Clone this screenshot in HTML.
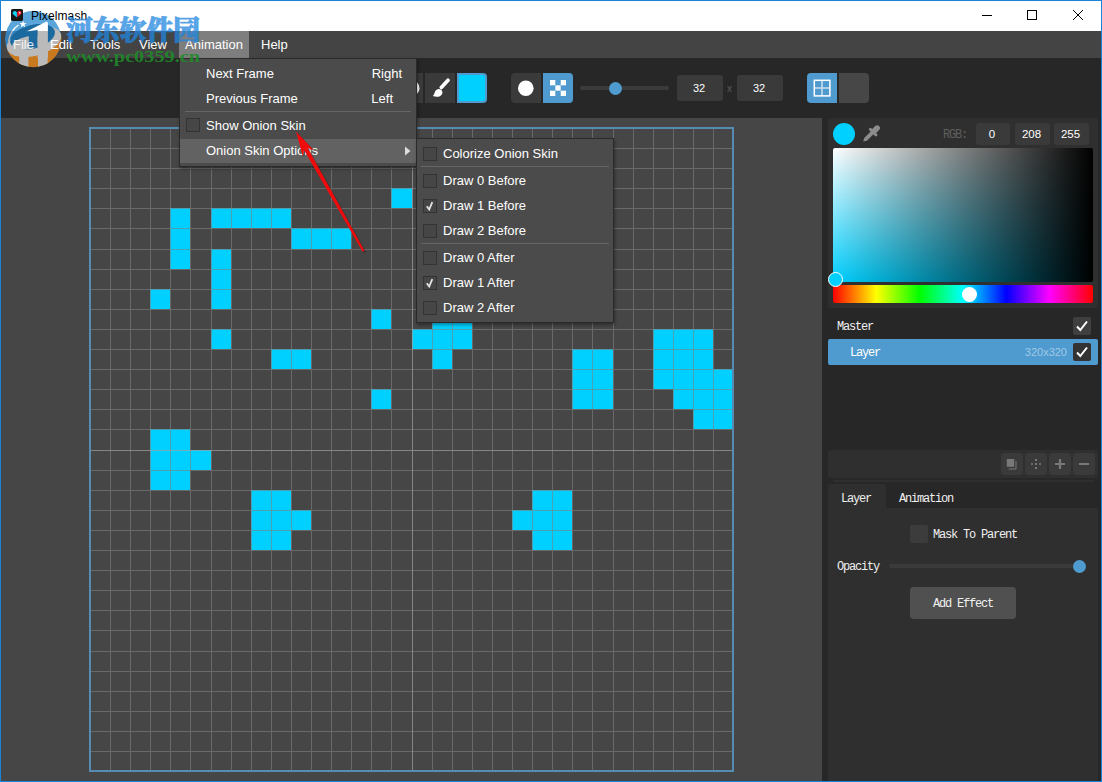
<!DOCTYPE html>
<html lang="en">
<head>
<meta charset="utf-8">
<title>Pixelmash</title>
<style>
*{box-sizing:border-box;margin:0;padding:0}
html,body{width:1102px;height:782px;overflow:hidden;background:#272727}
body{position:relative;font-family:"Liberation Sans",sans-serif;color:#eee}
.abs{position:absolute}
#win{position:absolute;left:0;top:0;width:1102px;height:782px;border:1px solid #1883d7;overflow:hidden;background:#272727}
#title{position:absolute;left:1px;top:1px;width:1100px;height:30px;background:#fff;color:#000;font-size:12px}
#title .name{position:absolute;left:30px;top:8px;line-height:14px;letter-spacing:.1px}
#menubar{position:absolute;left:1px;top:31px;width:1100px;height:27px;background:#444;font-size:13px;color:#fff}
#menubar span{position:absolute;top:0;height:27px;line-height:27px;}
#toolbar{position:absolute;left:1px;top:58px;width:1100px;height:60px;background:#272727}
#canvas{position:absolute;left:1px;top:118px;width:821px;height:663px;background:#464646}
.grid{position:absolute;left:0;top:118px}
.tb{position:absolute;top:73px;height:30px;background:#3a3a3a}
.inp{position:absolute;text-indent:-2px;background:#3a3a3a;border-radius:3px;color:#fff;font-size:11px;text-align:center}
.mono{font-family:"Liberation Mono","DejaVu Sans Mono",monospace;font-size:12px;letter-spacing:-1.2px;color:#f0f0f0;white-space:nowrap;margin-top:1px}
.menu{position:absolute;background:#4b4b4b;border:1px solid #2a2a2a;box-shadow:1px 2px 3px rgba(0,0,0,.35);font-size:13px;color:#fff}
.menu .it{position:absolute;left:0;right:0;height:25px;line-height:25px;white-space:nowrap}
.menu .sep{position:absolute;height:1px;background:#666}
.cb{position:absolute;width:14px;height:14px;border:1px solid #333;background:#464646}
.panel{position:absolute;background:#2f2f2f;border-radius:3px}
.chk{position:absolute;width:18px;height:18px;background:#3f3f3f;border-radius:2px}
.lbtn{position:absolute;top:453px;width:22px;height:22px;background:#3a3a3a;border-radius:3px}
</style>
</head>
<body>
<div id="win">
<div id="wrap" style="position:absolute;left:-1px;top:-1px;width:1102px;height:782px">

<!-- title bar bg -->
<div class="abs" style="left:1px;top:1px;width:1100px;height:30px;background:#fff"></div>

<!-- menu bar bg -->
<div id="menubar"><span style="left:178px;width:70px;background:#7e7e7e"></span></div>

<!-- toolbar -->
<div id="toolbar"></div>
<!-- watermark -->
<svg class="abs" style="left:0;top:8px" width="80" height="64" viewBox="0 8 80 64">
  <defs>
    <clipPath id="lc"><circle cx="33.200" cy="39" r="28.200"/></clipPath>
    <linearGradient id="lb" gradientUnits="userSpaceOnUse" x1="0" y1="0" x2="0" y2="80"><stop offset=".3875" stop-color="#5aa5da"/><stop offset=".3876" stop-color="#3582be"/><stop offset=".725" stop-color="#3582be"/><stop offset=".7251" stop-color="#2c6fa6"/></linearGradient>
    <linearGradient id="lw" gradientUnits="userSpaceOnUse" x1="0" y1="0" x2="0" y2="80"><stop offset=".3875" stop-color="#fff"/><stop offset=".3876" stop-color="#bababa"/></linearGradient>
  </defs>
  <g clip-path="url(#lc)">
    <circle cx="33.200" cy="39" r="28.200" fill="url(#lb)"/>
    <path d="M5 47C14 61 44 60 62 33V70H5z" fill="#c97a1e"/>
    <path d="M19.200 52h9.200v16h-9.200zM38 50h9.600v18H38z" fill="#bababa"/>
    <ellipse cx="34" cy="41.500" rx="28" ry="14.200" transform="rotate(-15 34 41.500)" fill="url(#lw)"/>
    <ellipse cx="32.500" cy="36.800" rx="23" ry="11.800" transform="rotate(-15 32.500 36.800)" fill="#1b6a9f"/>
    <ellipse cx="27.500" cy="43" rx="15.500" ry="6.500" transform="rotate(-12 27.500 43)" fill="#bababa"/>
    <path d="M28.800 29h8.800v18.500h-8.800z" fill="#1b6a9f"/>
    <path d="M37.600 28.500L46.500 21.500l1.400 1V58h-10.300z" fill="url(#lw)"/>
    <path d="M26.500 31.500L46.500 21.500 37.600 30z" fill="url(#lw)"/>
    <path d="M8.500 41C10 33 14 28 18.500 25" stroke="url(#lw)" stroke-width="1.300" fill="none"/>
    <path d="M23 20.500l.9 2.500 2.600.1-2 1.600.7 2.500-2.200-1.500-2.200 1.500.7-2.500-2-1.600 2.600-.1z" fill="#fff"/>
  </g>
</svg>
<!-- title bar -->
<div id="title" style="background:none">
  <svg class="abs" style="left:10px;top:8px" width="12" height="12" viewBox="0 0 12 12"><rect width="12" height="12" rx="1.600" fill="#161616"/><path d="M5.900 8.600L2.300 5.500A2.100 2.100 0 1 1 5.900 3.500z" fill="#16d0f4"/><path d="M6.300 8.200L9.900 5.300A2.100 2.100 0 1 0 6.300 3.500z" fill="#ee2030"/><circle cx="8.700" cy="3.700" r=".8" fill="#fff"/></svg>
  <div class="name">Pixelmash</div>
  <svg class="abs" style="left:960px;top:0" width="140" height="30" viewBox="0 0 140 30" fill="none" stroke="#000" stroke-width="1"><path d="M21 14.5h10"/><rect x="66.5" y="9.500" width="9" height="9"/><path d="M112 9l10 10M122 9l-10 10"/></svg>
</div>

<!-- menu bar text -->
<div id="menubar" style="background:none">
  <span style="left:12px;opacity:.85">File</span>
  <span style="left:49px">Edit</span>
  <span style="left:89px">Tools</span>
  <span style="left:138px">View</span>
  <span style="left:179px;width:68px;text-align:center">Animation</span>
  <span style="left:260px">Help</span>
</div>


<div class="tb" style="left:395px;width:28px"></div>
<svg class="abs" style="left:395px;top:73px" width="28" height="30"><circle cx="16.500" cy="15.200" r="8" fill="#fff"/></svg>
<div class="tb" style="left:425px;width:30px"></div>
<svg class="abs" style="left:425px;top:73px" width="30" height="30" viewBox="0 0 30 30"><path d="M23 7.300L16.300 14.500" stroke="#fff" stroke-width="3.700" stroke-linecap="round"/><path d="M7.800 22.900c1.400-1 1.500-2.700 2.300-4.400 1.200-2.500 4.200-3.300 6.200-1.500 1.900 1.800 1.300 4.600-1 5.900-2.100 1.200-4.900 1-7.500 0z" fill="#fff"/></svg>
<div class="tb" style="left:457px;width:30px;background:#00d0ff;border:2px solid #4f9bcf;border-radius:0 4px 4px 0"></div>

<div class="tb" style="left:511px;width:30px;border-radius:4px 0 0 4px"></div>
<svg class="abs" style="left:511px;top:73px" width="30" height="30"><circle cx="14.800" cy="15.200" r="7.800" fill="#fff"/></svg>
<div class="tb" style="left:543px;width:30px;background:#4f9bcf;border-radius:0 4px 4px 0"></div>
<svg class="abs" style="left:543px;top:73px" width="30" height="30" viewBox="0 0 30 30" fill="#fff"><rect x="7" y="7" width="5.300" height="5.300"/><rect x="17.700" y="7" width="5.300" height="5.300"/><rect x="12.300" y="12.300" width="5.400" height="5.400" fill-opacity=".96"/><rect x="7" y="17.700" width="5.300" height="5.300"/><rect x="17.700" y="17.700" width="5.300" height="5.300"/></svg>

<div class="abs" style="left:580px;top:86px;width:89px;height:4px;border-radius:2px;background:#3a3a3a"></div>
<div class="abs" style="left:609px;top:81.500px;width:13px;height:13px;border-radius:50%;background:#4f9bcf"></div>

<div class="inp" style="left:677px;top:75px;width:46px;height:26px;line-height:26px">32</div>
<div class="abs" style="left:725.5px;top:83px;font-size:10px;color:#5a5a5a;width:8px;text-align:center">x</div>
<div class="inp" style="left:737px;top:75px;width:46px;height:26px;line-height:26px">32</div>

<div class="tb" style="left:807px;width:30px;background:#4f9bcf;border-radius:4px 0 0 4px"></div>
<svg class="abs" style="left:807px;top:73px" width="30" height="30" viewBox="0 0 30 30" fill="none"><path d="M15 7v16M7 15h16" stroke="#fff" stroke-opacity=".7" stroke-width="1.500"/><rect x="7.300" y="7.300" width="15.600" height="15.600" stroke="#fff" stroke-width="1.500"/></svg>
<div class="tb" style="left:839px;width:30px;background:#474747;border-radius:0 4px 4px 0"></div>

<!-- canvas -->
<div id="canvas"></div>
<svg class="grid" width="823" height="664" viewBox="0 118 823 664" shape-rendering="crispEdges">
<rect x="391" y="188" width="21" height="20" fill="#00d0ff"/>
<rect x="170" y="208" width="20" height="20" fill="#00d0ff"/>
<rect x="170" y="228" width="20" height="21" fill="#00d0ff"/>
<rect x="170" y="249" width="20" height="20" fill="#00d0ff"/>
<rect x="211" y="208" width="20" height="20" fill="#00d0ff"/>
<rect x="231" y="208" width="20" height="20" fill="#00d0ff"/>
<rect x="251" y="208" width="20" height="20" fill="#00d0ff"/>
<rect x="271" y="208" width="20" height="20" fill="#00d0ff"/>
<rect x="291" y="228" width="20" height="21" fill="#00d0ff"/>
<rect x="311" y="228" width="20" height="21" fill="#00d0ff"/>
<rect x="331" y="228" width="20" height="21" fill="#00d0ff"/>
<rect x="211" y="249" width="20" height="20" fill="#00d0ff"/>
<rect x="211" y="269" width="20" height="20" fill="#00d0ff"/>
<rect x="211" y="289" width="20" height="20" fill="#00d0ff"/>
<rect x="150" y="289" width="20" height="20" fill="#00d0ff"/>
<rect x="371" y="309" width="20" height="20" fill="#00d0ff"/>
<rect x="211" y="329" width="20" height="20" fill="#00d0ff"/>
<rect x="271" y="349" width="20" height="20" fill="#00d0ff"/>
<rect x="291" y="349" width="20" height="20" fill="#00d0ff"/>
<rect x="432" y="309" width="20" height="20" fill="#00d0ff"/>
<rect x="452" y="309" width="20" height="20" fill="#00d0ff"/>
<rect x="412" y="329" width="20" height="20" fill="#00d0ff"/>
<rect x="432" y="329" width="20" height="20" fill="#00d0ff"/>
<rect x="452" y="329" width="20" height="20" fill="#00d0ff"/>
<rect x="432" y="349" width="20" height="20" fill="#00d0ff"/>
<rect x="371" y="389" width="20" height="20" fill="#00d0ff"/>
<rect x="572" y="349" width="20" height="20" fill="#00d0ff"/>
<rect x="572" y="369" width="20" height="20" fill="#00d0ff"/>
<rect x="572" y="389" width="20" height="20" fill="#00d0ff"/>
<rect x="592" y="349" width="21" height="20" fill="#00d0ff"/>
<rect x="592" y="369" width="21" height="20" fill="#00d0ff"/>
<rect x="592" y="389" width="21" height="20" fill="#00d0ff"/>
<rect x="653" y="329" width="20" height="20" fill="#00d0ff"/>
<rect x="653" y="349" width="20" height="20" fill="#00d0ff"/>
<rect x="653" y="369" width="20" height="20" fill="#00d0ff"/>
<rect x="673" y="329" width="20" height="20" fill="#00d0ff"/>
<rect x="673" y="349" width="20" height="20" fill="#00d0ff"/>
<rect x="673" y="369" width="20" height="20" fill="#00d0ff"/>
<rect x="693" y="329" width="20" height="20" fill="#00d0ff"/>
<rect x="693" y="349" width="20" height="20" fill="#00d0ff"/>
<rect x="693" y="369" width="20" height="20" fill="#00d0ff"/>
<rect x="713" y="369" width="20" height="20" fill="#00d0ff"/>
<rect x="713" y="389" width="20" height="20" fill="#00d0ff"/>
<rect x="713" y="409" width="20" height="20" fill="#00d0ff"/>
<rect x="673" y="389" width="20" height="20" fill="#00d0ff"/>
<rect x="693" y="389" width="20" height="20" fill="#00d0ff"/>
<rect x="693" y="409" width="20" height="20" fill="#00d0ff"/>
<rect x="150" y="429" width="20" height="21" fill="#00d0ff"/>
<rect x="150" y="450" width="20" height="20" fill="#00d0ff"/>
<rect x="150" y="470" width="20" height="20" fill="#00d0ff"/>
<rect x="170" y="429" width="20" height="21" fill="#00d0ff"/>
<rect x="170" y="450" width="20" height="20" fill="#00d0ff"/>
<rect x="170" y="470" width="20" height="20" fill="#00d0ff"/>
<rect x="190" y="450" width="21" height="20" fill="#00d0ff"/>
<rect x="251" y="490" width="20" height="20" fill="#00d0ff"/>
<rect x="251" y="510" width="20" height="20" fill="#00d0ff"/>
<rect x="251" y="530" width="20" height="20" fill="#00d0ff"/>
<rect x="271" y="490" width="20" height="20" fill="#00d0ff"/>
<rect x="271" y="510" width="20" height="20" fill="#00d0ff"/>
<rect x="271" y="530" width="20" height="20" fill="#00d0ff"/>
<rect x="291" y="510" width="20" height="20" fill="#00d0ff"/>
<rect x="532" y="490" width="20" height="20" fill="#00d0ff"/>
<rect x="532" y="510" width="20" height="20" fill="#00d0ff"/>
<rect x="532" y="530" width="20" height="20" fill="#00d0ff"/>
<rect x="552" y="490" width="20" height="20" fill="#00d0ff"/>
<rect x="552" y="510" width="20" height="20" fill="#00d0ff"/>
<rect x="552" y="530" width="20" height="20" fill="#00d0ff"/>
<rect x="512" y="510" width="20" height="20" fill="#00d0ff"/>
<path d="M110.5 128V771M90 148.5H733M130.5 128V771M90 168.5H733M150.5 128V771M90 188.5H733M170.5 128V771M90 208.5H733M190.5 128V771M90 228.5H733M211.5 128V771M90 249.5H733M231.5 128V771M90 269.5H733M251.5 128V771M90 289.5H733M271.5 128V771M90 309.5H733M291.5 128V771M90 329.5H733M311.5 128V771M90 349.5H733M331.5 128V771M90 369.5H733M351.5 128V771M90 389.5H733M371.5 128V771M90 409.5H733M391.5 128V771M90 429.5H733M432.5 128V771M90 470.5H733M452.5 128V771M90 490.5H733M472.5 128V771M90 510.5H733M492.5 128V771M90 530.5H733M512.5 128V771M90 550.5H733M532.5 128V771M90 570.5H733M552.5 128V771M90 590.5H733M572.5 128V771M90 610.5H733M592.5 128V771M90 630.5H733M613.5 128V771M90 651.5H733M633.5 128V771M90 671.5H733M653.5 128V771M90 691.5H733M673.5 128V771M90 711.5H733M693.5 128V771M90 731.5H733M713.5 128V771M90 751.5H733" stroke="#808080" stroke-opacity="0.6" stroke-width="1" fill="none"/>
<path d="M412.5 128V771M90 450.5H733" stroke="#a0a0a0" stroke-opacity="0.7" stroke-width="1" fill="none"/>
<rect x="90" y="128" width="643" height="643" fill="none" stroke="#568bb2" stroke-width="2"/>
</svg>

<!-- right column -->
<div class="abs" style="left:822px;top:118px;width:279px;height:663px;background:#272727"></div>

<!-- color panel -->
<div class="panel" style="left:828px;top:118px;width:270px;height:190px"></div>
<div class="abs" style="left:833px;top:123px;width:22px;height:22px;border-radius:50%;background:#00d0ff"></div>
<svg class="abs" style="left:861px;top:123px" width="22" height="22" viewBox="0 0 22 22"><path d="M2.200 18.600l1-3.500 7.300-7.300 2.700 2.700-7.300 7.300z" fill="#8c8c8c"/><path d="M9.300 6.200l5.700 5.700" stroke="#8c8c8c" stroke-width="2.800" stroke-linecap="round"/><path d="M12.800 8.400l3.300-3.300" stroke="#8c8c8c" stroke-width="5.600" stroke-linecap="round"/></svg>
<div class="abs mono" style="left:943px;top:127px;color:#5e5e5e;line-height:14px">RGB:</div>
<div class="inp" style="left:976px;top:123px;width:34px;height:22px;line-height:22px;font-size:11.500px">0</div>
<div class="inp" style="left:1015px;top:123px;width:35px;height:22px;line-height:22px;font-size:11.500px">208</div>
<div class="inp" style="left:1054px;top:123px;width:35px;height:22px;line-height:22px;font-size:11.500px">255</div>
<div class="abs" style="left:833px;top:148px;width:260px;height:134px;border-radius:2px;background:linear-gradient(to right,rgba(0,0,0,0),#000),linear-gradient(to bottom,#fff,#00d0ff)"></div>
<div class="abs" style="left:833px;top:285px;width:260px;height:18px;border-radius:2px;background:linear-gradient(to right,#f00 0%,#ff0 16.660%,#0f0 33.330%,#0ff 50%,#00f 66.660%,#f0f 83.330%,#f00 100%)"></div>
<div class="abs" style="left:828px;top:271.5px;width:15px;height:15px;border-radius:50%;background:#00d0ff;border:1.500px solid #fff"></div>
<div class="abs" style="left:962px;top:286.5px;width:15px;height:15px;border-radius:50%;background:#fff"></div>

<!-- layers -->
<div class="abs mono" style="left:837px;top:318.5px;line-height:15px">Master</div>
<div class="chk" style="left:1073px;top:317px"></div>
<svg class="abs" style="left:1073px;top:317px" width="18" height="18" viewBox="0 0 18 18"><path d="M4 9.500l3.300 3.500L14 4.500" fill="none" stroke="#fff" stroke-width="2"/></svg>
<div class="abs" style="left:828px;top:339px;width:270px;height:26px;background:#4f9bcf;border-radius:2px"></div>
<div class="abs mono" style="left:850px;top:344.5px;line-height:15px;color:#fff">Layer</div>
<div class="abs" style="left:1014px;top:345px;width:53px;text-align:right;font-size:11px;line-height:15px;color:#9fc8e6">320x320</div>
<div class="chk" style="left:1073px;top:343px;background:#333"></div>
<svg class="abs" style="left:1073px;top:343px" width="18" height="18" viewBox="0 0 18 18"><path d="M4 9.500l3.300 3.500L14 4.500" fill="none" stroke="#fff" stroke-width="2"/></svg>

<!-- layer toolbar -->
<div class="panel" style="left:828px;top:450px;width:270px;height:28px"></div>
<div class="lbtn" style="left:1001px"></div>
<div class="lbtn" style="left:1025px"></div>
<div class="lbtn" style="left:1049px"></div>
<div class="lbtn" style="left:1073px"></div>
<svg class="abs" style="left:1001px;top:453px" width="94" height="22" viewBox="0 0 94 22"><rect x="5.800" y="6" width="7.400" height="7.800" fill="#787878"/><path d="M15 8v8H7.800" stroke="#787878" stroke-width="1" fill="none"/><g fill="#787878"><rect x="34" y="6" width="2" height="2"/><rect x="34" y="14" width="2" height="2"/><rect x="30" y="10" width="2" height="2" fill-opacity=".8"/><rect x="38" y="10" width="2" height="2" fill-opacity=".8"/><rect x="34" y="10" width="2" height="2"/></g><path d="M54 11h10M59 6v10M78 11h10" stroke="#787878" stroke-width="2.200" fill="none"/></svg>
<div class="abs" style="left:833px;top:480px;width:260px;height:2px;background:#2f2f2f"></div>

<!-- tabs -->
<div class="abs" style="left:828px;top:484px;width:58px;height:26px;background:#2f2f2f;border-radius:3px 3px 0 0"></div>
<div class="abs" style="left:828px;top:508px;width:270px;height:274px;background:#2f2f2f"></div>
<div class="abs mono" style="left:841px;top:491px;line-height:15px">Layer</div>
<div class="abs mono" style="left:899px;top:491px;line-height:15px">Animation</div>

<div class="abs" style="left:910px;top:525px;width:18px;height:18px;background:#3c3c3c;border-radius:2px"></div>
<div class="abs mono" style="left:933px;top:527px;line-height:15px">Mask To Parent</div>
<div class="abs mono" style="left:837px;top:559px;line-height:15px">Opacity</div>
<div class="abs" style="left:889px;top:564px;width:196px;height:4px;border-radius:2px;background:#3a3a3a"></div>
<div class="abs" style="left:1073px;top:559.500px;width:13px;height:13px;border-radius:50%;background:#4f9bcf"></div>
<div class="abs" style="left:910px;top:587px;width:106px;height:32px;background:#505050;border-radius:4px"></div>
<div class="abs mono" style="left:910px;top:596px;width:106px;text-align:center;line-height:15px">Add Effect</div>

<!-- dropdown menu -->
<div class="menu" style="left:179px;top:58px;width:238px;height:109px">
  <div class="it" style="top:2px"><span class="abs" style="left:26px">Next Frame</span><span class="abs" style="right:14px">Right</span></div>
  <div class="it" style="top:27px"><span class="abs" style="left:26px">Previous Frame</span><span class="abs" style="right:23px">Left</span></div>
  <div class="sep" style="left:5px;right:5px;top:52px"></div>
  <div class="it" style="top:54px"><span class="cb" style="left:6px;top:5px"></span><span class="abs" style="left:26px">Show Onion Skin</span></div>
  <div class="it" style="top:80px;height:24px;line-height:23px;background:#626262"><span class="abs" style="left:26px">Onion Skin Options</span><svg class="abs" style="right:5px;top:7px" width="6" height="10"><path d="M0 .5l5.500 4.500-5.500 4.500z" fill="#ddd"/></svg></div>
</div>

<!-- submenu -->
<div class="menu" style="left:416px;top:138px;width:198px;height:185px">
  <div class="it" style="top:2px"><span class="cb" style="left:6px;top:6px"></span><span class="abs" style="left:26px">Colorize Onion Skin</span></div>
  <div class="sep" style="left:4px;right:4px;top:27px"></div>
  <div class="it" style="top:29px"><span class="cb" style="left:6px;top:6px"></span><span class="abs" style="left:26px">Draw 0 Before</span></div>
  <div class="it" style="top:54px"><span class="cb" style="left:6px;top:6px"></span><svg class="abs" style="left:6px;top:6px" width="14" height="14"><path d="M3.800 7.200l2.400 3.300L9.300 3.200" fill="none" stroke="#e4e4e4" stroke-width="1.800"/></svg><span class="abs" style="left:26px">Draw 1 Before</span></div>
  <div class="it" style="top:79px"><span class="cb" style="left:6px;top:6px"></span><span class="abs" style="left:26px">Draw 2 Before</span></div>
  <div class="sep" style="left:4px;right:4px;top:104px"></div>
  <div class="it" style="top:106px"><span class="cb" style="left:6px;top:6px"></span><span class="abs" style="left:26px">Draw 0 After</span></div>
  <div class="it" style="top:131px"><span class="cb" style="left:6px;top:6px"></span><svg class="abs" style="left:6px;top:6px" width="14" height="14"><path d="M3.800 7.200l2.400 3.300L9.300 3.200" fill="none" stroke="#e4e4e4" stroke-width="1.800"/></svg><span class="abs" style="left:26px">Draw 1 After</span></div>
  <div class="it" style="top:156px"><span class="cb" style="left:6px;top:6px"></span><span class="abs" style="left:26px">Draw 2 After</span></div>
</div>

<!-- red arrow -->
<svg class="abs" style="left:280px;top:110px" width="100" height="150" viewBox="280 110 100 150"><path d="M296.0 131.5L313.8 150.2L307.7 147.9L364.6 250.8L362.6 251.8L304.0 150.0L302.8 156.4z" fill="#000" fill-opacity=".3" transform="translate(1.2 1)"/><path d="M296.0 131.5L313.8 150.2L307.7 147.9L364.6 250.8L362.6 251.8L304.0 150.0L302.8 156.4z" fill="#f00c0c"/></svg>



<!-- watermark text -->
<svg class="abs" style="left:0;top:8px" width="210" height="64" viewBox="0 8 210 64">
  <text x="66" y="39.5" font-family="'Liberation Serif','Noto Serif CJK SC',serif" font-weight="900" font-size="27.5" fill="#1f86e0" stroke="#1f86e0" opacity=".75" stroke-width=".9" stroke-linejoin="round" textLength="134" lengthAdjust="spacingAndGlyphs">河东软件园</text>
  <text x="66" y="62" font-family="'Liberation Serif',serif" font-weight="bold" font-size="17" fill="#1e8a28" fill-opacity=".9" textLength="134" lengthAdjust="spacingAndGlyphs">www.pc0359.cn</text>
</svg>

</div>
</div>
</body>
</html>
